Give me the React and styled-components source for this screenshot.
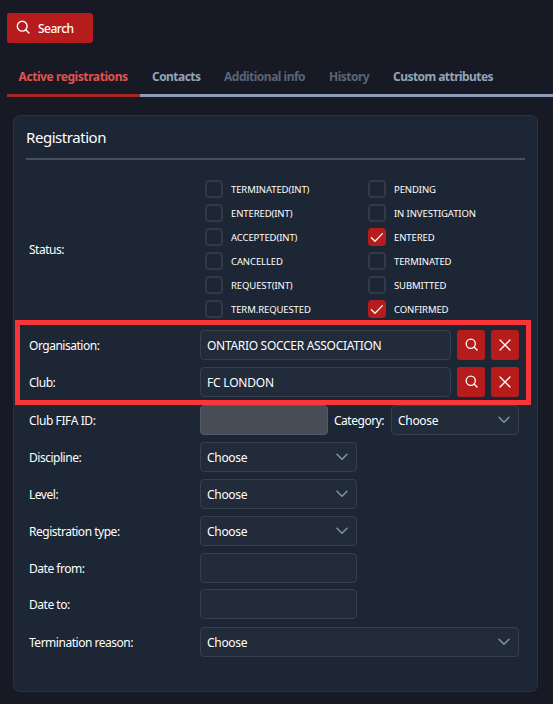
import React from "react";
import styled, { createGlobalStyle } from "styled-components";

const GlobalStyle = createGlobalStyle`
  * { box-sizing: border-box; }
  html, body { margin: 0; background: #171a24; }
  body {
    height: 704px;
    overflow: hidden;
    font-family: "Noto Sans", "Open Sans", sans-serif;
    font-size: 12px;
    color: #fff;
  }
  button, input { font: inherit; color: inherit; letter-spacing: inherit; }
`;

const Page = styled.main`
  display: flex;
  flex-direction: column;
  width: 553px;
  height: 704px;
  padding-top: 13px;
  background: #171a24;
  border-bottom: 1px solid #1c1416;
`;

const SearchButton = styled.button`
  display: flex;
  align-items: center;
  gap: 8px;
  width: 86px;
  height: 30px;
  margin-left: 7px;
  padding: 0 0 0 9px;
  border: 0;
  border-radius: 3px;
  background: #b71c1c;
  font-weight: 500;
  letter-spacing: -0.5px;

  span { padding-top: 1px; }
  svg { margin-top: -2px; }
`;

const Tabs = styled.nav`
  display: flex;
  height: 39px;
  margin: 15px 0 0 7px;
`;

const colours = { active: "#e05252", normal: "#94a3b8", disabled: "#5a6474" };

const Tab = styled.a`
  flex: 0 0 ${(p) => p.$width}px;
  padding: 0 0 0 ${(p) => p.$pad || 12}px;
  border-bottom: 3px solid ${(p) => (p.$state === "active" ? "#a82424" : "#8c9ab5")};
  color: ${(p) => colours[p.$state]};
  font-weight: 700;
  line-height: 38px;
  white-space: nowrap;
  letter-spacing: ${(p) => p.$track || 0}px;
`;

const Card = styled.section`
  width: 525px;
  height: 577px;
  margin: 18px 0 0 13px;
  padding: 0 12px;
  border: 1px solid #29333f;
  border-radius: 7px;
  background: #1d2634;
`;

const Title = styled.h2`
  height: 44px;
  margin: 0;
  border-bottom: 2px solid #48515b;
  font-size: 15px;
  font-weight: 400;
  line-height: 43px;
  letter-spacing: ${(p) => p.$track}px;
`;

const Row = styled.div`
  display: grid;
  grid-template-columns: 171px 1fr;
  align-items: center;
  width: 490px;
  height: 30px;
  margin: 0 0 ${(p) => p.$gap ?? 7}px 3px;
`;

const StatusRow = styled(Row)`
  height: 138px;
  margin: 20px 0 0 3px;
  grid-template-columns: 176px 1fr;
`;

const Label = styled.label`
  padding-top: 1px;
  white-space: nowrap;
  letter-spacing: ${(p) => p.$track ?? -0.48}px;
`;

const InlineLabel = styled(Label)`
  width: 51px;
`;

const StatusGrid = styled.div`
  display: grid;
  grid-template: repeat(6, 18px) / 163px 1fr;
  gap: 6px 0;
`;

const Option = styled.label`
  display: flex;
  align-items: center;
  gap: 8px;
  font-size: 9.5px;
  white-space: nowrap;
  letter-spacing: -0.1px;
`;

const Box = styled.span`
  display: grid;
  place-items: center;
  width: 18px;
  height: 18px;
  border: 2px solid ${(p) => (p.$checked ? "#b71c1c" : "#303a49")};
  border-radius: 4px;
  background: ${(p) => (p.$checked ? "#b71c1c" : "transparent")};
`;

const Highlight = styled.div`
  width: 516px;
  height: 85px;
  margin: 2px 0 0 -11px;
  padding: 5px 0 0 6px;
  border: 5px solid #fb3537;

  & > ${Row} { margin-left: 3px; }
`;

const Controls = styled.div`
  display: flex;
  align-items: center;
  gap: 6px;
`;

const Field = styled.div`
  display: flex;
  align-items: center;
  justify-content: space-between;
  width: ${(p) => p.$width}px;
  height: 30px;
  padding: 1px 8px 0 6px;
  border: 1px solid ${(p) => (p.$disabled ? "#535d68" : "#36404d")};
  border-radius: 4px;
  background: ${(p) => (p.$disabled ? "#474c57" : "#222b39")};
  white-space: nowrap;
  letter-spacing: ${(p) => p.$track ?? -0.3}px;

  svg { margin-top: -1px; }
`;

const IconButton = styled.button`
  display: grid;
  place-items: center;
  width: 28px;
  height: 30px;
  padding: 0 0 1px;
  border: 0;
  border-radius: 3px;
  background: #b71c1c;
`;

const SearchIcon = ({ size = 13 }) => (
  <svg width={size} height={size} viewBox="0 0 14 14" fill="none" stroke="#fff" strokeWidth="1.4">
    <circle cx="6.2" cy="6.2" r="4.9" />
    <path d="M9.7 9.7 13 13" strokeLinecap="round" />
  </svg>
);

const CloseIcon = () => (
  <svg width="14" height="14" viewBox="0 0 14 14" fill="none" stroke="#fff" strokeWidth="1.3">
    <path d="M2 2 12 12M12 2 2 12" strokeLinecap="round" />
  </svg>
);

const CheckIcon = () => (
  <svg width="14" height="14" viewBox="0 0 14 14" fill="none" stroke="#fff" strokeWidth="1.3">
    <path d="M1.4 7.8 5 11.2 12.4 3.6" strokeLinecap="round" strokeLinejoin="round" />
  </svg>
);

const Chevron = () => (
  <svg width="12" height="8" viewBox="0 0 12 8" fill="none" stroke="#8492aa" strokeWidth="1.5">
    <path d="M1 1.3 6 6.3 11 1.3" strokeLinecap="round" strokeLinejoin="round" />
  </svg>
);

const Select = ({ width }) => (
  <Field $width={width}>
    <span>Choose</span>
    <Chevron />
  </Field>
);

const Lookup = ({ label, value, track }) => (
  <Row>
    <Label>{label}</Label>
    <Controls>
      <Field $width={251} $track={track}>{value}</Field>
      <IconButton aria-label={`Find ${label}`}><SearchIcon /></IconButton>
      <IconButton aria-label={`Clear ${label}`}><CloseIcon /></IconButton>
    </Controls>
  </Row>
);

const statuses = [
  ["TERMINATED(INT)"], ["PENDING"],
  ["ENTERED(INT)"], ["IN INVESTIGATION"],
  ["ACCEPTED(INT)"], ["ENTERED", true],
  ["CANCELLED"], ["TERMINATED"],
  ["REQUEST(INT)"], ["SUBMITTED"],
  ["TERM.REQUESTED"], ["CONFIRMED", true],
];

export default function App() {
  return (
    <>
      <GlobalStyle />
      <Page>
        <SearchButton><SearchIcon size={14} /><span>Search</span></SearchButton>
        <Tabs>
          <Tab $state="active" $width={133} $pad={11.5} $track={-0.42}>Active registrations</Tab>
          <Tab $state="normal" $width={72} $track={-0.55}>Contacts</Tab>
          <Tab $state="disabled" $width={105} $track={-0.5}>Additional info</Tab>
          <Tab $state="disabled" $width={64} $track={-0.5}>History</Tab>
          <Tab $state="normal" $width={172} $track={-0.55}>Custom attributes</Tab>
        </Tabs>
        <Card>
          <Title $track={-0.45}>Registration</Title>
          <StatusRow>
            <Label>Status:</Label>
            <StatusGrid>
              {statuses.map(([name, checked]) => (
                <Option key={name}>
                  <Box $checked={checked}>{checked && <CheckIcon />}</Box>
                  {name}
                </Option>
              ))}
            </StatusGrid>
          </StatusRow>
          <Highlight>
            <Lookup label="Organisation:" value="ONTARIO SOCCER ASSOCIATION" track={-0.3} />
            <Lookup label="Club:" value="FC LONDON" track={-0.2} />
          </Highlight>
          <Row>
            <Label $track={-0.4}>Club FIFA ID:</Label>
            <Controls>
              <Field $width={128} $disabled />
              <InlineLabel>Category:</InlineLabel>
              <Select width={128} />
            </Controls>
          </Row>
          <Row><Label>Discipline:</Label><Select width={157} /></Row>
          <Row><Label>Level:</Label><Select width={157} /></Row>
          <Row><Label>Registration type:</Label><Select width={157} /></Row>
          <Row $gap={6}><Label>Date from:</Label><Field $width={157} /></Row>
          <Row $gap={8}><Label>Date to:</Label><Field $width={157} /></Row>
          <Row><Label>Termination reason:</Label><Select width={319} /></Row>
        </Card>
      </Page>
    </>
  );
}
